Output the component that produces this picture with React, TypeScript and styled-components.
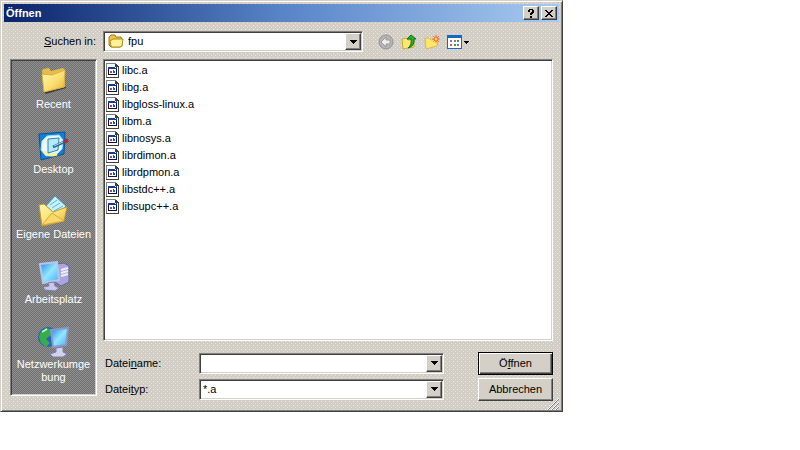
import React from 'react';
import styled, { createGlobalStyle, css } from 'styled-components';

const Global = createGlobalStyle`
  *{box-sizing:border-box}
  body{margin:0;background:#fff;color:#000;font:11px/13px "Liberation Sans",Arial,sans-serif}
  button,input,select{font:inherit;color:inherit;margin:0;border-radius:0}
`;
const sunken = css`
  border:1px solid;border-color:#808080 #fff #fff #808080;
  box-shadow:inset 1px 1px #404040,inset -1px -1px #d4d0c8;
`;
const raised = css`
  border:1px solid;border-color:#fff #404040 #404040 #fff;
  box-shadow:inset -1px -1px #808080;
`;
const Page = styled.div`padding-right:237px;`;
const Dialog = styled.main`
  min-width:480px;padding:3px 3px 1px;
  border:1px solid;border-color:#d4d0c8 #404040 #404040 #d4d0c8;
  box-shadow:inset 1px 1px #fff,inset -1px -1px #808080;
  background:
    conic-gradient(at 1px 1px,transparent 75%,#efede6 0) 0 0/4px 4px,
    conic-gradient(at 1px 1px,transparent 75%,#e6e3db 0) 2px 2px/4px 4px,
    #d2cec6;
`;
const TitleBar = styled.header`
  display:flex;align-items:center;height:18px;padding:0 2px;
  background:linear-gradient(90deg,#0a246a,#5884c8 50%,#a6caf0);color:#fff;
`;
const Title = styled.h1`flex:1;margin:0;font-size:11px;line-height:13px;`;
const Caption = styled.button`
  ${raised} width:16px;height:14px;margin-left:2px;padding:0;background:#d4d0c8;display:grid;place-items:center;
`;
const Bar = styled.div`display:flex;align-items:center;height:37px;padding:2px 0 0 40px;`;
const LookLabel = styled.label`width:59px;`;
const Tools = styled.div`display:flex;gap:7px;margin-left:15px;`;
const Tool = styled.button`
  height:16px;padding:0;border:0;background:none;display:flex;
`;
const Body = styled.div`display:grid;grid-template-columns:87px minmax(0,1fr);column-gap:6px;padding:0 6px;`;
const Places = styled.nav`
  ${sunken} height:337px;padding-top:6px;
  background:repeating-conic-gradient(#909090 0 25%,#707070 0 50%) 0 0/2px 2px;
`;
const Place = styled.a`
  display:block;height:65px;color:#fff;text-align:center;text-decoration:none;
  svg{display:block;margin:0 auto;}
`;
const Main = styled.div`display:flex;flex-direction:column;`;
const Files = styled.ul`${sunken} height:282px;margin:0;padding:2px 1px;list-style:none;background:#fff;`;
const File = styled.li`display:flex;align-items:center;gap:1px;height:17px;`;
const Form = styled.div`
  display:grid;grid-template-columns:96px minmax(0,1fr) 34px 75px;align-items:center;
  grid-template-rows:26px 26px;padding-top:9px;
`;
const FormLabel = styled.label`padding-left:2px;`;
const Combo = styled.div<{ $grow?: boolean }>`
  ${sunken} position:relative;display:flex;height:21px;padding:1px;background:#fff;
  ${p => p.$grow && 'flex:0 1 260px;'}
`;
const Field = styled.input`
  flex:1;min-width:0;padding:1px 2px;border:0;outline:0;background:none;
`;
const Select = styled.select`
  flex:1;min-width:0;padding:1px 2px;border:0;outline:0;background:none;appearance:none;
`;
const Drop = styled.button`
  ${raised} width:16px;height:17px;padding:0;background:#d4d0c8;display:grid;place-items:center;
`;
const FolderSlot = styled.span`display:flex;padding:0 2px 0 3px;`;
const Push = styled.button<{ $main?: boolean }>`
  ${raised} height:23px;padding:0;background:#d4d0c8;grid-column:4;
  ${p => p.$main && 'border-color:#000;box-shadow:inset 1px 1px #fff,inset -1px -1px #404040,inset -2px -2px #808080;'}
`;
const Grip = styled.div`display:flex;justify-content:flex-end;height:12px;margin-top:-4px;`;

const Arrow = () => <svg width="7" height="4" shapeRendering="crispEdges"><path d="M0 0h7v1H6v1H5v1H4v1H3V3H2V2H1V1H0z" /></svg>;
const Mini = () => (
  <svg width="16" height="16" viewBox="0 0 16 16">
    <path d="M1 4l2-2h4l1 2h5l1 2v7l-2 1H3l-2-2z" fill="#edc349" stroke="#a77b12" />
    <path d="M3 13L2 8l3-2h10l-1 7-2 1H4z" fill="#fff09a" stroke="#b48a20" />
  </svg>
);
const FileIcon = () => (
  <svg width="16" height="16" viewBox="0 0 16 16" shapeRendering="crispEdges">
    <path d="M1 0h10l3 3v12H1z" fill="#fff" />
    <path d="M1 0h10v1H2v13H1z" fill="#808080" />
    <path d="M11 1h1v1h1v1h1v12H1v-1h12V4h-3V1z" fill="#404040" />
    <path d="M3 4h9v8H3z" fill="#10104a" /><path d="M4 6h7v5H4z" fill="#fff" />
    <path d="M3 4h9v2H3z" fill="#123b9c" /><path d="M10 4h1v1h-1z" fill="#fff" />
    <path d="M5 8h2v2H5z" fill="#b44" /><path d="M8 7h1v1H8zM8 8h2v2H8z" fill="#25b" />
  </svg>
);
const BigIcon = ({ kind }: { kind: string }) => (
  <svg width="32" height="32" viewBox="0 0 32 32">
    <defs>
      <linearGradient id={kind + 'y'} x2="1" y2="1"><stop stopColor="#fff9b0" /><stop offset=".55" stopColor="#fbdf70" /><stop offset="1" stopColor="#e5b137" /></linearGradient>
      <linearGradient id={kind + 'b'} x2="1" y2="1"><stop stopColor="#2387e7" /><stop offset=".5" stopColor="#92e6ff" /><stop offset="1" stopColor="#45aaf0" /></linearGradient>
    </defs>
    {kind === 'recent' && <g><path d="M6 26L27 20l1 2L8 28z" fill="#3e3e37" /><path d="M4 5l1-2 6-1 2 3 12-3 2 2v17L6 26z" fill="#e6bd4c" /><path d="M4 8l10 1 13-5-1 17L6 26z" fill={`url(#${kind}y)`} stroke="#dcb042" /></g>}
    {kind === 'desktop' && <g><path d="M1 3l26-2-1 22-23 6z" fill="#167ed5" stroke="#07549b" /><path d="M9 5l12-1 4 5-1 9-5 5-11 2-5-6 1-9z" fill="#e9faff" stroke="#9bdff6" /><path d="M6 20q4 6 13 3" fill="none" stroke="#fff09a" strokeWidth="3" /><path d="M10 8l11-1-1 12-10 3z" fill="#b6e9fb" stroke="#2788bb" /><path d="M15 16l11-5" stroke="#266799" strokeWidth="3" /><path d="M16 15l9-4" stroke="#a5dced" /><path d="M26 11l4-2" stroke="#9b3444" strokeWidth="4" /></g>}
    {kind === 'files' && <g><path d="M8 10L17 0l11 10-9 10z" fill="#c6f2ff" stroke="#479bc5" /><path d="M12 9l7-5M14 12l8-5M16 15l9-5" stroke="#59b6de" /><path d="M1 9l5-1 9 8 14-5-3 14L4 30z" fill={`url(#${kind}y)`} stroke="#c7992c" /><path d="M4 29l10-12 12 8z" fill="#fbd86a" stroke="#d6a936" /></g>}
    {kind === 'computer' && <g><path d="M19 3l7-1 5 3v16l-8 4-6-4z" fill="#aaa5dc" stroke="#69659d" /><path d="M23 9l7-2M23 12l7-2M23 15l7-2" stroke="#ececff" strokeWidth="2" /><path d="M2 3l17-2 2 18-16 3z" fill={`url(#${kind}b)`} stroke="#b6c4ed" strokeWidth="2" /><path d="M10 22l6-1 1 4 4 2-4 3-10-1-2-3 6-1z" fill="#c9c8e8" stroke="#7d7cac" /></g>}
    {kind === 'network' && <g><circle cx="10" cy="11" r="10" fill="#2862bf" /><path d="M2 7l6-5 7 2-2 5-5 4 4 4-4 4-5-4-2-6z" fill="#37ad47" /><path d="M4 6l5-3" stroke="#afffb1" strokeWidth="2" /><path d="M13 4l17-2-2 17-13 2z" fill={`url(#${kind}b)`} stroke="#8899ca" strokeWidth="2" /><path d="M18 22l7-1v5l4 2-4 3H15l-3-3 6-2z" fill="#d2d2ec" stroke="#8080aa" /></g>}
  </svg>
);
const ToolIcon = ({ kind }: { kind: string }) => (
  <svg width={kind === 'views' ? 23 : 16} height="16" viewBox={kind === 'views' ? '0 0 23 16' : '0 0 16 16'}>
    {kind === 'back' && <g><circle cx="8" cy="8" r="7" fill="#b5b5b5" stroke="#929292" /><path d="M8 3L3 8l5 5v-3h4V6H8z" fill="#eee" stroke="#999" /></g>}
    {kind === 'up' && <g><path d="M1 5l4-1 2 2 6-1v8L2 15z" fill="#fde76e" stroke="#cca935" /><path d="M7 14q4-3 3-9H6l4-4 5 4h-2q1 7-6 9z" fill="#2aab32" stroke="#11731b" /></g>}
    {kind === 'new' && <g><path d="M1 4h4l2 2 7-1-1 7-11 3z" fill="#fce66c" stroke="#d9b84d" /><path d="M12 1v8M8 5h8M9 2l6 6M15 2L9 8" stroke="#f3753c" /><circle cx="12" cy="5" r="2" fill="#ffd56b" stroke="#f3652c" /></g>}
    {kind === 'views' && <g shapeRendering="crispEdges"><path d="M0 1h15v14H0z" fill="#1769c4" /><path d="M1 4h13v10H1z" fill="#fff" /><path d="M3 6h2v2H3zM10 10h2v2h-2z" fill="#6386bc" /><path d="M7 6h2v2H7zM3 10h2v2H3z" fill="#c56568" /><path d="M10 6h2v2h-2zM7 10h2v2H7z" fill="#3e9a51" /><path d="M17 7h5v1h-1v1h-1v1h-1V9h-1V8h-1z" /></g>}
  </svg>
);
const names = ['libc.a', 'libg.a', 'libgloss-linux.a', 'libm.a', 'libnosys.a', 'librdimon.a', 'librdpmon.a', 'libstdc++.a', 'libsupc++.a'];
const places = [['recent', 'Recent'], ['desktop', 'Desktop'], ['files', 'Eigene Dateien'], ['computer', 'Arbeitsplatz'], ['network', 'Netzwerkumge\u200bbung']];
const tools = [['back', 'Zurück'], ['up', 'Übergeordneter Ordner'], ['new', 'Neuer Ordner'], ['views', 'Ansicht']];

export default function App() {
  return <Page><Global /><Dialog>
    <TitleBar><Title>Öffnen</Title>
      <Caption aria-label="Hilfe"><svg width="8" height="9" shapeRendering="crispEdges"><path d="M1 1h1V0h4v1h1v3H6v1H5v1H3V4h1V3h1V1H3v2H1zM3 7h2v2H3z" /></svg></Caption>
      <Caption aria-label="Schließen"><svg width="8" height="7" shapeRendering="crispEdges"><path d="M0 0h2v1h1v1h2V1h1V0h2v1H7v1H6v1H5v1h1v1h1v1h1v1H6V6H5V5H3v1H2v1H0V6h1V5h1V4h1V3H2V2H1V1H0z" /></svg></Caption>
    </TitleBar>
    <Bar><LookLabel htmlFor="look"><u>S</u>uchen in:</LookLabel>
      <Combo $grow><FolderSlot><Mini /></FolderSlot><Select id="look"><option>fpu</option></Select><Drop aria-label="Ordnerliste"><Arrow /></Drop></Combo>
      <Tools>{tools.map(([k, l]) => <Tool key={k} aria-label={l}><ToolIcon kind={k} /></Tool>)}</Tools>
    </Bar>
    <Body>
      <Places>{places.map(([k, l]) => <Place href="#" key={k}><BigIcon kind={k} />{l}</Place>)}</Places>
      <Main>
        <Files>{names.map(n => <File key={n}><FileIcon />{n}</File>)}</Files>
        <Form>
          <FormLabel htmlFor="name">Datei<u>n</u>ame:</FormLabel><Combo><Field id="name" /><Drop aria-label="Dateinamen"><Arrow /></Drop></Combo><Push $main>Ö<u>f</u>fnen</Push>
          <FormLabel htmlFor="type">Datei<u>t</u>yp:</FormLabel><Combo><Select id="type"><option>*.a</option></Select><Drop aria-label="Dateitypen"><Arrow /></Drop></Combo><Push>Abbrechen</Push>
        </Form>
      </Main>
    </Body>
    <Grip><svg width="12" height="12"><path d="M1 12L12 1M5 12l7-7M9 12l3-3" stroke="#808080" /><path d="M0 12L12 0M4 12l8-8M8 12l4-4" stroke="#fff" /></svg></Grip>
  </Dialog></Page>;
}
